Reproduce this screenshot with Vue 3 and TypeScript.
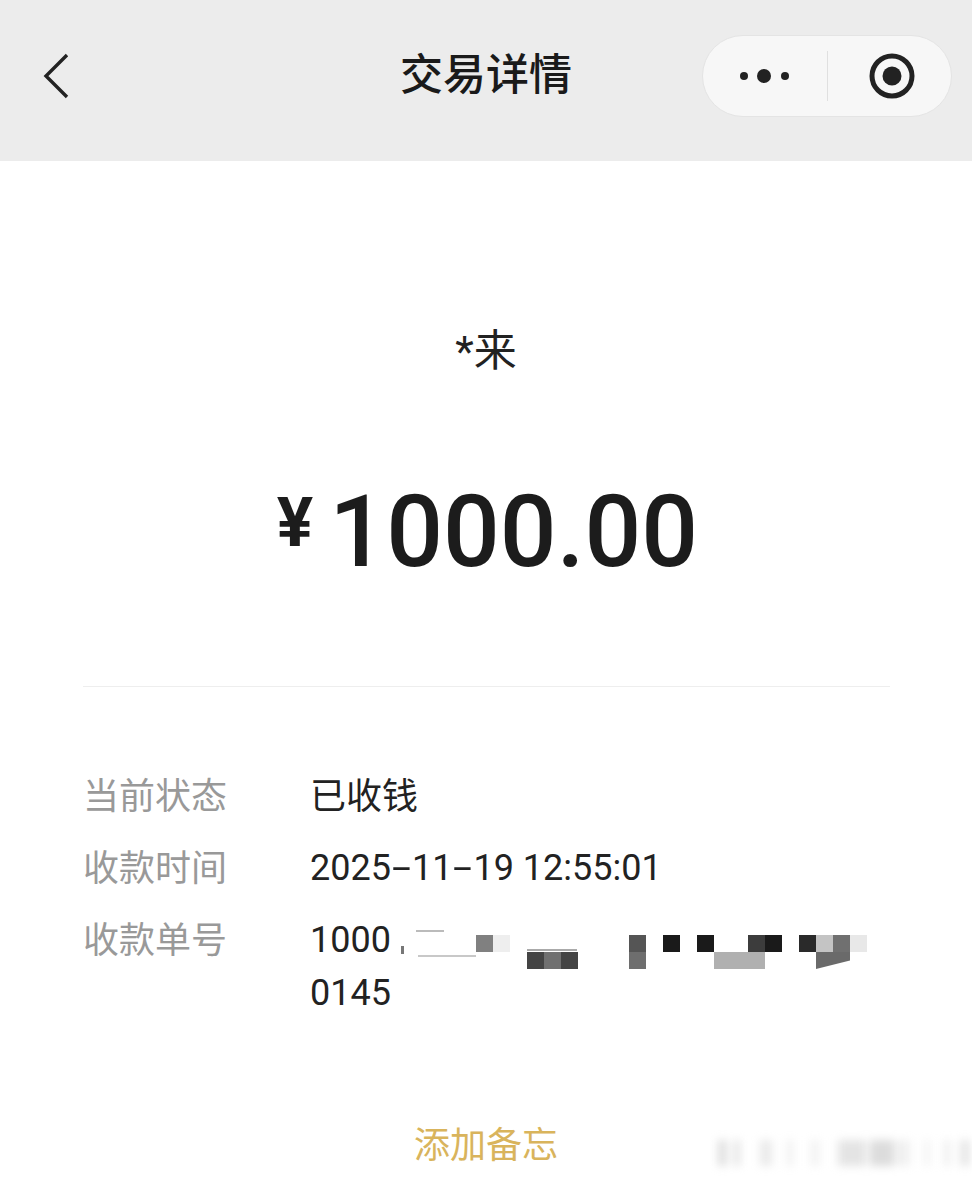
<template>
  <div class="page">
    <header class="nav">
      <svg class="back" width="26" height="46" viewBox="0 0 26 46">
        <path d="M24 2 L3 23 L24 44" fill="none" stroke="#222" stroke-width="3.4" />
      </svg>
      <h1 class="title">交易详情</h1>
      <div class="capsule">
        <svg width="52" height="18" viewBox="0 0 52 18">
          <circle cx="5" cy="9" r="4" fill="#222" />
          <circle cx="25" cy="9" r="7" fill="#222" />
          <circle cx="46" cy="9" r="4" fill="#222" />
        </svg>
        <span class="capsule-line"></span>
        <svg width="46" height="46" viewBox="0 0 46 46">
          <circle cx="23" cy="23" r="20" fill="none" stroke="#222" stroke-width="5" />
          <circle cx="23" cy="23" r="9.5" fill="#222" />
        </svg>
      </div>
    </header>

    <section class="summary">
      <div class="payee">*来</div>
      <div class="amount"><span class="yen">¥</span><span>1000.00</span></div>
    </section>

    <div class="divider"></div>

    <section class="details">
      <div class="row">
        <div class="label">当前状态</div>
        <div class="value cjk">已收钱</div>
      </div>
      <div class="row">
        <div class="label">收款时间</div>
        <div class="value time">2025<b>-</b>11<b>-</b>19 12:55:01</div>
      </div>
      <div class="row">
        <div class="label">收款单号</div>
        <div class="value number">1000<br />0145</div>
      </div>
    </section>

    <div class="memo">添加备忘</div>

    <!-- mosaic over the order number -->
    <i
      v-for="(c, i) in mosaic"
      :key="i"
      class="cell"
      :style="{ left: c[0] + 'px', top: c[1] + 'px', width: c[2] + 'px', height: c[3] + 'px', background: c[4] }"
    ></i>
    <i class="cell slant"></i>

    <!-- blurred watermark -->
    <div class="mark">
      <i
        v-for="(b, i) in marks"
        :key="i"
        :style="{ left: b[0] + 'px', width: b[1] + 'px', opacity: b[2] }"
      ></i>
    </div>
  </div>
</template>

<script setup lang="ts">
type Cell = [number, number, number, number, string]

const top = 935
const low = 952

const mosaic: Cell[] = [
  [476, top, 17, 17, '#808080'],
  [493, top, 17, 17, '#eeeeee'],
  [527, low, 17, 17, '#444444'],
  [544, low, 17, 17, '#707070'],
  [561, low, 17, 17, '#444444'],
  [629, top, 17, 17, '#555555'],
  [629, low, 17, 17, '#6e6e6e'],
  [663, top, 17, 17, '#1a1a1a'],
  [697, top, 17, 17, '#1a1a1a'],
  [714, low, 51, 17, '#b0b0b0'],
  [748, top, 17, 17, '#3c3c3c'],
  [765, top, 17, 17, '#1a1a1a'],
  [799, top, 17, 17, '#2a2a2a'],
  [816, top, 17, 17, '#c4c4c4'],
  [833, top, 17, 17, '#707070'],
  [850, top, 17, 17, '#e8e8e8'],
  // bits of the digits that show around the patches
  [401, 946, 3, 8, '#777777'],
  [418, 955, 58, 2, '#c8c8c8'],
  [416, 930, 28, 2, '#bbbbbb'],
  [527, 949, 50, 2, '#aaaaaa'],
]

const marks: [number, number, number][] = [
  [8, 9, 0.55],
  [24, 6, 0.5],
  [50, 12, 0.35],
  [76, 8, 0.2],
  [100, 10, 0.2],
  [128, 28, 0.45],
  [160, 24, 0.6],
  [186, 14, 0.25],
  [214, 6, 0.2],
  [234, 6, 0.3],
  [250, 10, 0.4],
]
</script>

<style>
body {
  background: #fff;
}
</style>

<style scoped>
.page {
  position: relative;
  width: 972px;
  height: 1177px;
  overflow: hidden;
  background: #fff;
  color: #222;
  font-family: Roboto, "Noto Sans CJK SC", sans-serif;
}

.nav {
  position: relative;
  display: flex;
  align-items: center;
  justify-content: space-between;
  height: 161px;
  padding: 0 20px 10px 43px;
  box-sizing: border-box;
  background: #ececec;
}

.title {
  position: absolute;
  left: 0;
  right: 0;
  top: 41px;
  margin: 0;
  text-align: center;
  font-size: 43px;
  line-height: 60px;
  font-weight: 500;
  color: #1a1a1a;
  font-family: "Noto Sans CJK SC", sans-serif;
}

.capsule {
  display: flex;
  align-items: center;
  justify-content: space-between;
  width: 250px;
  height: 82px;
  padding: 0 36px;
  box-sizing: border-box;
  background: #f7f7f7;
  border: 1px solid #e4e4e4;
  border-radius: 41px;
}

.capsule-line {
  width: 1px;
  height: 50px;
  margin-right: 6px;
  background: #e0e0e0;
}

.summary {
  display: flex;
  flex-direction: column;
  align-items: center;
  padding-top: 161px;
}

.payee {
  font-size: 43px;
  line-height: 58px;
}

.amount {
  display: flex;
  align-items: flex-start;
  margin-top: 92px;
  font-size: 100px;
  line-height: 120px;
  font-weight: 500;
  color: #1c1c1c;
}

.yen {
  font-size: 68px;
  line-height: 102px;
  margin: 0 16px 0 3px;
  font-weight: 700;
}

.divider {
  height: 1px;
  margin: 94px 82px 0 83px;
  background: #eeeeee;
}

.details {
  display: flex;
  flex-direction: column;
  gap: 20px;
  padding: 80px 0 0 83px;
}

.row {
  display: flex;
}

.label {
  width: 227px;
  flex: none;
  font-size: 36px;
  line-height: 52px;
  color: #999;
  font-family: "Noto Sans CJK SC", sans-serif;
}

.value {
  font-size: 36px;
  line-height: 52px;
  color: #222;
}

.value.cjk {
  font-family: "Noto Sans CJK SC", sans-serif;
}

.time,
.number {
  margin: 3px 0 -3px;
}

.number {
  line-height: 53px;
}

.time b {
  display: inline-block;
  width: 21px;
  font-weight: 400;
  text-align: center;
  transform: scaleX(1.9);
}

.memo {
  margin-top: 99px;
  text-align: center;
  font-size: 36px;
  line-height: 52px;
  color: #d9b45c;
  font-family: "Noto Sans CJK SC", sans-serif;
}

.cell {
  position: absolute;
  height: 17px;
}

.slant {
  left: 816px;
  top: 952px;
  width: 34px;
  background: #6a6a6a;
  clip-path: polygon(0 0, 100% 0, 100% 50%, 0 100%);
}

.mark {
  position: absolute;
  left: 710px;
  top: 1138px;
  width: 255px;
  height: 30px;
  filter: blur(4px);
}

.mark i {
  position: absolute;
  top: 2px;
  height: 26px;
  background: #c4c4c4;
}
</style>
